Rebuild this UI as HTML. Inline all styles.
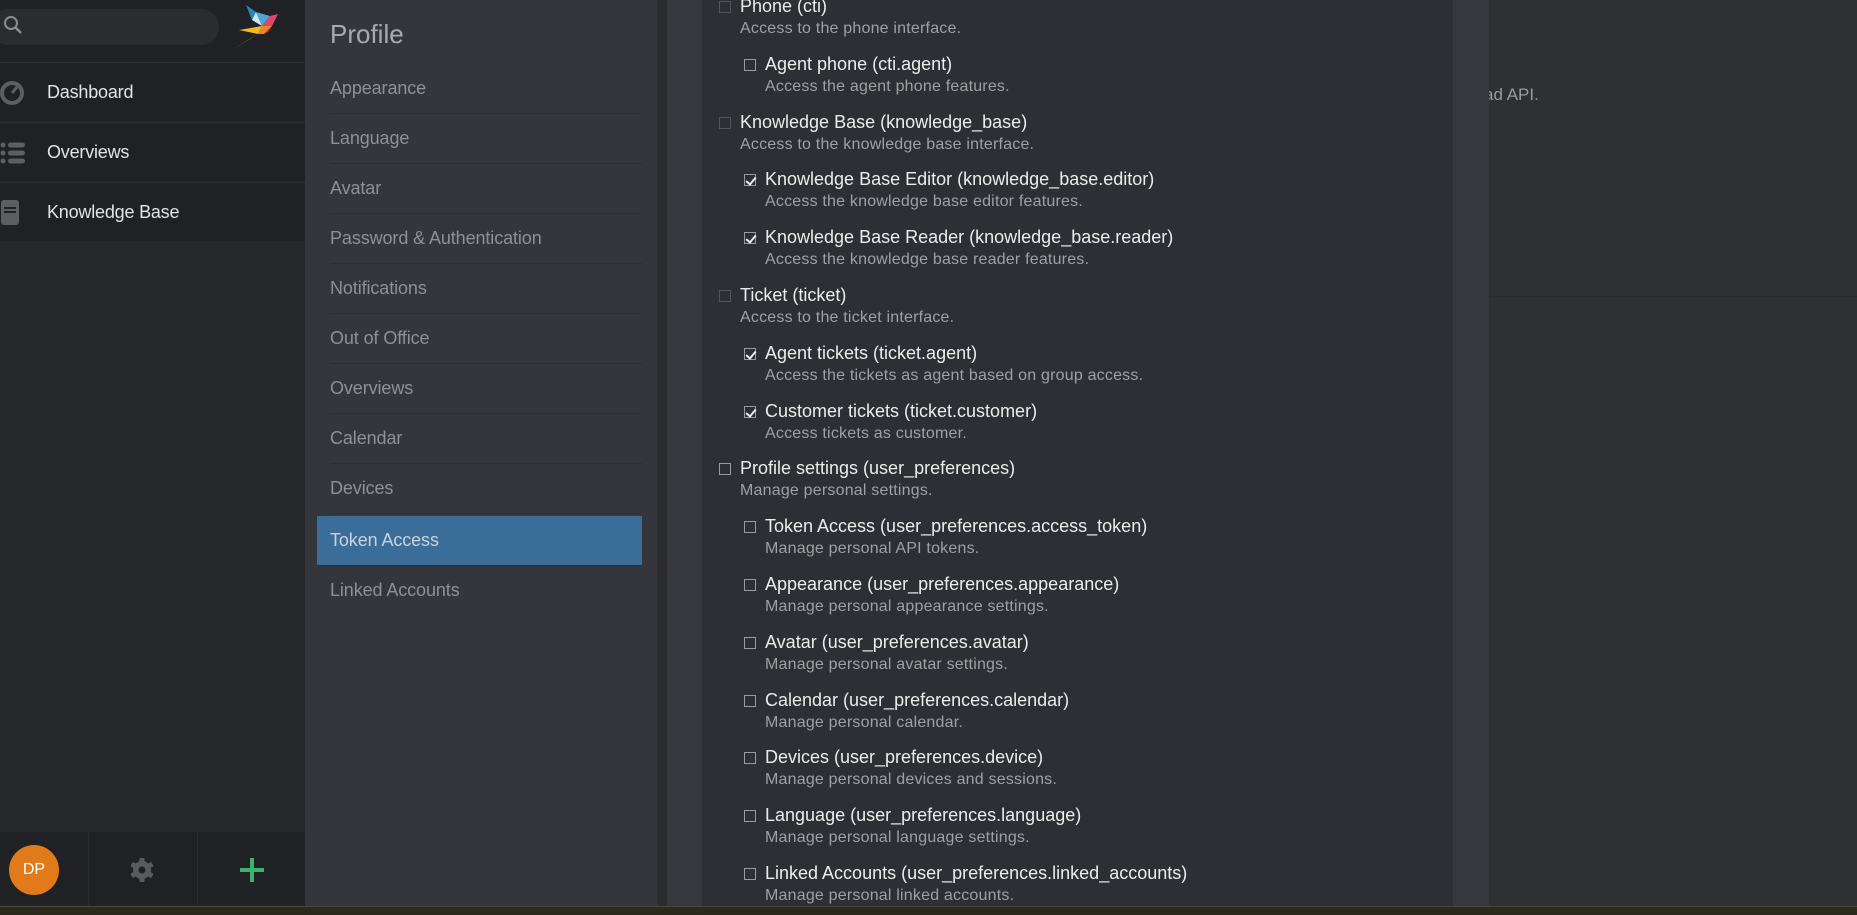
<!DOCTYPE html>
<html><head><meta charset="utf-8">
<style>
*{margin:0;padding:0;box-sizing:border-box}
body{width:1857px;height:915px;overflow:hidden;background:#2f3034;font-family:"Liberation Sans",sans-serif;position:relative}
.a{position:absolute}
.side{left:0;top:0;width:305px;height:906px;background:#27282c}
.nav{left:0;width:305px;height:59px;background:#202124;border-top:1px solid #2e2f33;color:#e3e3e3;font-size:18px;letter-spacing:-0.2px}
.nav span{position:absolute;left:47px;top:19px}
.prof{left:305px;top:0;width:352px;height:906px;background:#35363b}
.mi{left:330px;width:312px;height:50px;border-bottom:1px solid #2e2f33;color:#8f9094;font-size:18px;letter-spacing:-0.1px;padding-top:14px}
.t{color:#ececec;font-size:18px;letter-spacing:0;white-space:nowrap}
.d{color:#a0a0a3;font-size:16px;letter-spacing:0.2px;white-space:nowrap}
.cb{width:12px;height:12px;border:1px solid #9a9b9e;position:absolute}
.cb.top{border-color:#55565a}
.cb.on::after{content:"";position:absolute;left:3px;top:0px;width:4px;height:8px;border:solid #eee;border-width:0 2px 2px 0;transform:rotate(40deg)}
</style></head><body>
<div class="a side"></div>
<div class="a" style="left:0;top:0;width:305px;height:62px;background:#202124"></div>
<div class="a" style="left:-10px;top:9px;width:229px;height:36px;border-radius:18px;background:#2b2c30"></div>
<svg class="a" style="left:2px;top:14px" width="24" height="24" viewBox="0 0 24 24"><circle cx="9" cy="9" r="6" fill="none" stroke="#8b8c90" stroke-width="2"/><line x1="13" y1="13" x2="19" y2="19" stroke="#8b8c90" stroke-width="2.5"/></svg>
<svg class="a" style="left:234px;top:2px" width="50" height="48" viewBox="0 0 50 48">
<polygon points="12,3 22,10 18,18" fill="#2a86b8"/><polygon points="18,18 22,10 28,24" fill="#cfe6f2"/><polygon points="22,10 36,14 28,24" fill="#4aa6d6"/><polygon points="36,14 44,12 38,24 28,24" fill="#e2456a"/><polygon points="5,28 28,24 24,32" fill="#f4b820"/><polygon points="24,32 28,24 38,24 30,32" fill="#e8852a"/><polygon points="0,47 24,32 14,38" fill="#f6c726"/><polygon points="30,32 38,24 34,30" fill="#c33"/></svg>
<div class="a nav" style="top:62px"><svg class="a" style="left:0;top:16px" width="28" height="28" viewBox="0 0 28 28"><circle cx="12" cy="14" r="12" fill="#5d5e62"/><circle cx="12" cy="14" r="8" fill="#202124"/><line x1="12" y1="14" x2="17" y2="8" stroke="#5d5e62" stroke-width="3"/></svg><span>Dashboard</span></div>
<div class="a nav" style="top:122px"><svg class="a" style="left:0;top:18px" width="26" height="24"><g fill="#5d5e62"><circle cx="3" cy="4" r="2.5"/><circle cx="3" cy="12" r="2.5"/><circle cx="3" cy="20" r="2.5"/><rect x="8" y="1.5" width="17" height="5" rx="2.5"/><rect x="8" y="9.5" width="17" height="5" rx="2.5"/><rect x="8" y="17.5" width="17" height="5" rx="2.5"/></g></svg><span>Overviews</span></div>
<div class="a nav" style="top:182px"><svg class="a" style="left:0;top:16px" width="22" height="28"><rect x="1" y="1" width="18" height="25" rx="3" fill="#5d5e62"/><rect x="4" y="8" width="12" height="2" fill="#202124"/><rect x="4" y="12" width="12" height="2" fill="#202124"/></svg><span>Knowledge Base</span></div>
<div class="a" style="left:0;top:832px;width:305px;height:74px;background:#202124"></div>
<div class="a" style="left:88px;top:832px;width:1px;height:74px;background:#2a2b2f"></div>
<div class="a" style="left:197px;top:832px;width:1px;height:74px;background:#2a2b2f"></div>
<div class="a" style="left:9px;top:845px;width:50px;height:50px;border-radius:50%;background:#e07a1a;color:#fff;font-size:16px;text-align:center;line-height:50px">DP</div>
<svg class="a" style="left:129px;top:857px" width="26" height="26" viewBox="0 0 26 26"><g fill="#5a5b5f"><circle cx="13" cy="13" r="9"/><rect x="10.5" y="1" width="5" height="24" rx="1"/><rect x="10.5" y="1" width="5" height="24" rx="1" transform="rotate(60 13 13)"/><rect x="10.5" y="1" width="5" height="24" rx="1" transform="rotate(120 13 13)"/></g><circle cx="13" cy="13" r="3.5" fill="#202124"/></svg>
<div class="a" style="left:240px;top:868px;width:24px;height:4px;background:#3bb36a"></div>
<div class="a" style="left:250px;top:858px;width:4px;height:24px;background:#3bb36a"></div>
<div class="a" style="left:0;top:906px;width:1857px;height:9px;background:#2b2a1c;border-top:1px solid #4a4935"></div>

<div class="a prof"></div>
<div class="a" style="left:330px;top:19px;color:#a9aaae;font-size:26px">Profile</div>
<div class="a mi" style="top:64px">Appearance</div>
<div class="a mi" style="top:114px">Language</div>
<div class="a mi" style="top:164px">Avatar</div>
<div class="a mi" style="top:214px">Password &amp; Authentication</div>
<div class="a mi" style="top:264px">Notifications</div>
<div class="a mi" style="top:314px">Out of Office</div>
<div class="a mi" style="top:364px">Overviews</div>
<div class="a mi" style="top:414px">Calendar</div>
<div class="a mi" style="top:464px">Devices</div>
<div class="a mi" style="top:516px;left:317px;width:325px;background:#3a6d98;color:#c9d3dd;padding-left:13px">Token Access</div>
<div class="a mi" style="top:566px;border:none">Linked Accounts</div>

<div class="a" style="left:657px;top:0;width:10px;height:906px;background:#2b2c30"></div>
<div class="a" style="left:1489px;top:296px;width:368px;height:1px;background:#2a2b2e"></div>
<div class="a" style="left:1484px;top:85px;color:#9a9b9f;font-size:17px">ad API.</div>
<div class="a" style="left:667px;top:0;width:822px;height:906px;background:#37383d"></div>
<div class="a" style="left:702px;top:0;width:751px;height:906px;background:#2e2f34"></div>

<div id="list"></div>
<script>
var items=[[0,"Phone (cti)","Access to the phone interface.",0],
[1,"Agent phone (cti.agent)","Access the agent phone features.",0],
[0,"Knowledge Base (knowledge_base)","Access to the knowledge base interface.",0],
[1,"Knowledge Base Editor (knowledge_base.editor)","Access the knowledge base editor features.",1],
[1,"Knowledge Base Reader (knowledge_base.reader)","Access the knowledge base reader features.",1],
[0,"Ticket (ticket)","Access to the ticket interface.",0],
[1,"Agent tickets (ticket.agent)","Access the tickets as agent based on group access.",1],
[1,"Customer tickets (ticket.customer)","Access tickets as customer.",1],
[0,"Profile settings (user_preferences)","Manage personal settings.",0],
[1,"Token Access (user_preferences.access_token)","Manage personal API tokens.",0],
[1,"Appearance (user_preferences.appearance)","Manage personal appearance settings.",0],
[1,"Avatar (user_preferences.avatar)","Manage personal avatar settings.",0],
[1,"Calendar (user_preferences.calendar)","Manage personal calendar.",0],
[1,"Devices (user_preferences.device)","Manage personal devices and sessions.",0],
[1,"Language (user_preferences.language)","Manage personal language settings.",0],
[1,"Linked Accounts (user_preferences.linked_accounts)","Manage personal linked accounts.",0]];
var h="";
items.forEach(function(it,i){var y=7+i*57.8;var cx=it[0]?744:719;var tx=it[0]?765:740;
var cls='cb'+(it[3]?' on':'')+(it[0]?'':' top');if(i==8)cls='cb';
h+='<div class="a '+cls+'" style="left:'+cx+'px;top:'+(y-6)+'px"></div>';
h+='<div class="a t" style="left:'+tx+'px;top:'+(y-11)+'px">'+it[1]+'</div>';
h+='<div class="a d" style="left:'+tx+'px;top:'+(y+13)+'px">'+it[2]+'</div>';});
document.getElementById("list").innerHTML=h;
</script>
</body></html>
